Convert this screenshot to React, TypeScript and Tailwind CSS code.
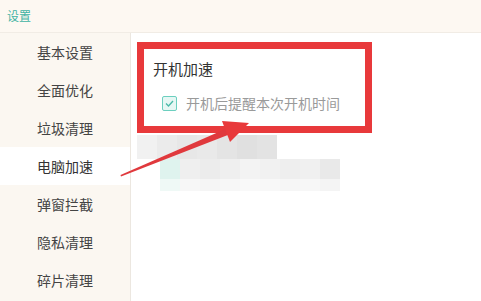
import React from "react";

const MENU = ["基本设置", "全面优化", "垃圾清理", "电脑加速", "弹窗拦截", "隐私清理", "碎片清理"];

// blurred placeholder rows under the highlighted block
const ROW1 = ["#f1f1f1", "#ebebeb", "#e7e7e7", "#e9e9e9", "#e4e4e4", "#e0e0e0", "#e3e3e3"];
const ROW2 = ["#dff3ee", "#efefef", "#ececec", "#efefef", "#f3f3f3", "#f1f1f1", "#eeeeee", "#f0f0f0", "#e9e9e9"];

export default function App() {
  return (
    <div
      className="relative h-[301px] w-[481px] overflow-hidden bg-white"
      style={{ fontFamily: '"Noto Sans CJK SC", "Noto Sans", sans-serif' }}
    >
      {/* Header */}
      <div className="flex h-[33px] items-center border-b border-[#f1ece5] bg-[#fdf8f2] pl-[7px] text-[12px] text-[#3fb3a3]">
        设置
      </div>

      <div className="flex h-[268px]">
        {/* Sidebar */}
        <div className="w-[131px] shrink-0 border-r border-[#ece7e0] bg-[#fbf7f1]">
          {MENU.map((m, i) => (
            <div
              key={m}
              className={
                i === 3
                  ? "flex h-[38px] items-center justify-center bg-white text-[14px] text-[#333]"
                  : "flex h-[38px] items-center justify-center text-[14px] text-[#444]"
              }
            >
              {m}
            </div>
          ))}
        </div>

        {/* Content */}
        <div className="flex-1 pl-[6px] pt-[9px]">
          <div className="h-[91px] w-[235px] border-[7px] border-[#e8393b] bg-white pl-[9px] pt-[10px]">
            <div className="text-[15px] leading-[20px] text-[#333]">开机加速</div>
            <div className="mt-[14px] flex items-center pl-[9px]">
              <div className="flex h-[15px] w-[15px] items-center justify-center rounded-[2px] border border-[#6ccfbf] bg-[#e6f7f4]">
                <svg width="11" height="11" viewBox="0 0 11 11">
                  <path d="M2 5.5 L4.5 8 L9 3" fill="none" stroke="#49b9a8" strokeWidth="1.3" />
                </svg>
              </div>
              <span className="ml-[9px] text-[14px] text-[#9a9a9a]">开机后提醒本次开机时间</span>
            </div>
          </div>

          <div className="mt-[2px] flex">
            {ROW1.map((c, i) => (
              <div key={i} className="h-[24px] w-[20px]" style={{ backgroundColor: c }} />
            ))}
          </div>
          <div className="ml-[23px] flex">
            {ROW2.map((c, i) => (
              <div key={i} className="h-[20px] w-[20px]" style={{ backgroundColor: c }} />
            ))}
          </div>
          <div className="ml-[23px] flex">
            {ROW2.map((c, i) => (
              <div key={i} className="h-[12px] w-[20px] opacity-50" style={{ backgroundColor: c }} />
            ))}
          </div>
        </div>
      </div>

      {/* Annotation arrow */}
      <svg className="absolute left-0 top-0" width="481" height="301" viewBox="0 0 481 301">
        <polygon points="121,176.5 120.5,175 230,127 233,133" fill="#e0393d" />
        <polygon points="222,121 249,123 230,142" fill="#e8393b" />
      </svg>
    </div>
  );
}
